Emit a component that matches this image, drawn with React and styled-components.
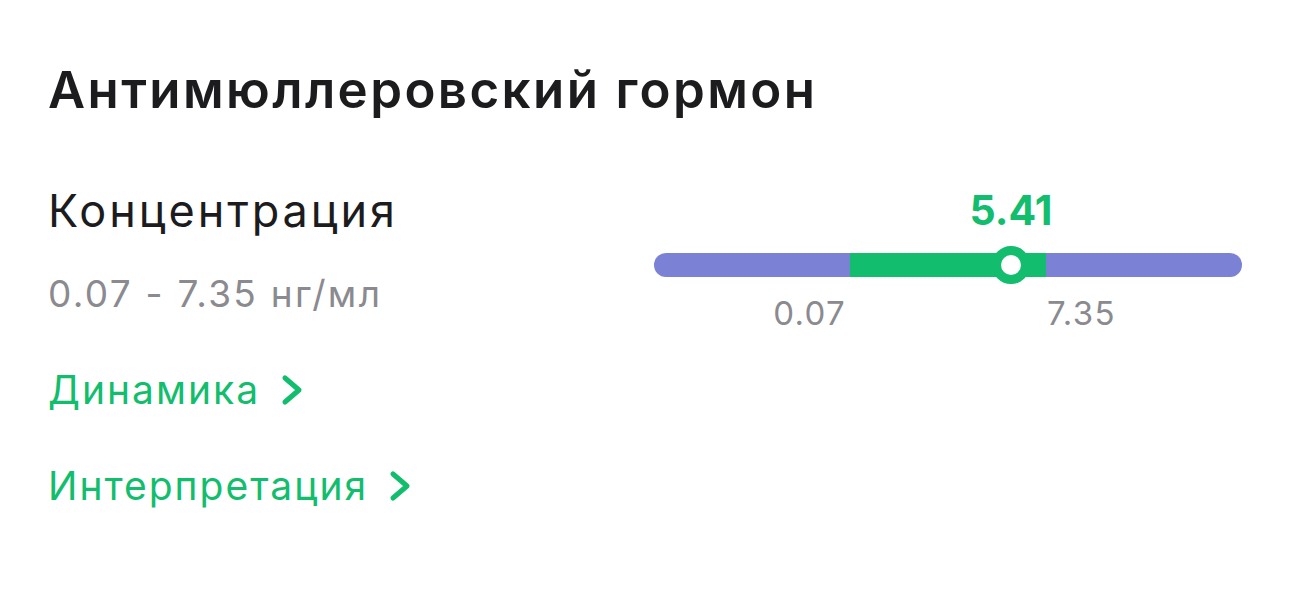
import React from "react";
import styled, { createGlobalStyle } from "styled-components";

const Global = createGlobalStyle`
  html, body { margin: 0; padding: 0; background: #ffffff; }
  body { font-family: Inter, "Noto Sans", sans-serif; -webkit-font-smoothing: antialiased; }
`;

const GREEN = "#12bd6e";
const PURPLE = "#7b82d6";
const GRAY = "#8a8a8f";
const DARK = "#1c1c1e";

const Page = styled.div`
  width: 1290px;
  height: 592px;
  overflow: hidden;
  box-sizing: border-box;
  padding: 60px 48px 0 48px;
`;

const Title = styled.h1`
  margin: 0;
  font-size: 51px;
  line-height: 60px;
  font-weight: 600;
  color: ${DARK};
  letter-spacing: 2.4px;
`;

const Row = styled.div`
  display: flex;
  justify-content: space-between;
  margin-top: 64px;
`;

const Left = styled.div`
  display: flex;
  flex-direction: column;
`;

const Name = styled.div`
  font-size: 45px;
  line-height: 54px;
  color: ${DARK};
  font-weight: 400;
  letter-spacing: 2.9px;
`;

const Range = styled.div`
  margin-top: 34px;
  font-size: 37px;
  line-height: 44px;
  color: ${GRAY};
  letter-spacing: 2.3px;
`;

const Link = styled.a`
  display: flex;
  align-items: center;
  gap: 20px;
  font-size: 39px;
  line-height: 48px;
  color: ${GREEN};
  text-decoration: none;
  letter-spacing: 2px;
  margin-top: ${(p) => p.$mt}px;
`;

const Right = styled.div`
  width: 588px;
  display: flex;
  flex-direction: column;
  padding-top: 3px;
`;

const ValueRow = styled.div`
  position: relative;
  height: 46px;
`;

const Value = styled.div`
  position: absolute;
  transform: translateX(-50%);
  top: 0;
  font-size: 41px;
  line-height: 46px;
  font-weight: 700;
  color: ${GREEN};
`;

const Track = styled.div`
  position: relative;
  margin-top: 20px;
  height: 24px;
  border-radius: 12px;
  background: ${PURPLE};
`;

const NormZone = styled.div`
  position: absolute;
  top: 0;
  bottom: 0;
  background: ${GREEN};
`;

const Knob = styled.div`
  position: absolute;
  top: 50%;
  width: 38px;
  height: 38px;
  box-sizing: border-box;
  border-radius: 50%;
  border: 9px solid ${GREEN};
  background: #ffffff;
  transform: translate(-50%, -50%);
`;

const Labels = styled.div`
  position: relative;
  height: 44px;
  margin-top: 16px;
`;

const Label = styled.div`
  position: absolute;
  top: 0;
  font-size: 33px;
  line-height: 40px;
  color: ${GRAY};
  letter-spacing: 1.3px;
  transform: ${(p) => (p.$side === "left" ? "translateX(-100%)" : "none")};
`;

const Chevron = () => (
  <svg width="24" height="32" viewBox="0 0 24 32" fill="none">
    <path
      d="M5 4 L19 16 L5 28"
      stroke={GREEN}
      strokeWidth="5"
      strokeLinecap="round"
      strokeLinejoin="round"
    />
  </svg>
);

export default function App() {
  const lo = 196;
  const hi = 392;
  const val = 357;
  return (
    <Page>
      <Global />
      <Title>Антимюллеровский гормон</Title>
      <Row>
        <Left>
          <Name>Концентрация</Name>
          <Range>0.07 - 7.35 нг/мл</Range>
          <Link $mt={50}>
            Динамика <Chevron />
          </Link>
          <Link $mt={48}>
            Интерпретация <Chevron />
          </Link>
        </Left>
        <Right>
          <ValueRow>
            <Value style={{ left: val }}>5.41</Value>
          </ValueRow>
          <Track>
            <NormZone style={{ left: lo, width: hi - lo }} />
            <Knob style={{ left: val }} />
          </Track>
          <Labels>
            <Label $side="left" style={{ left: lo - 4 }}>0.07</Label>
            <Label $side="right" style={{ left: hi + 1 }}>7.35</Label>
          </Labels>
        </Right>
      </Row>
    </Page>
  );
}
